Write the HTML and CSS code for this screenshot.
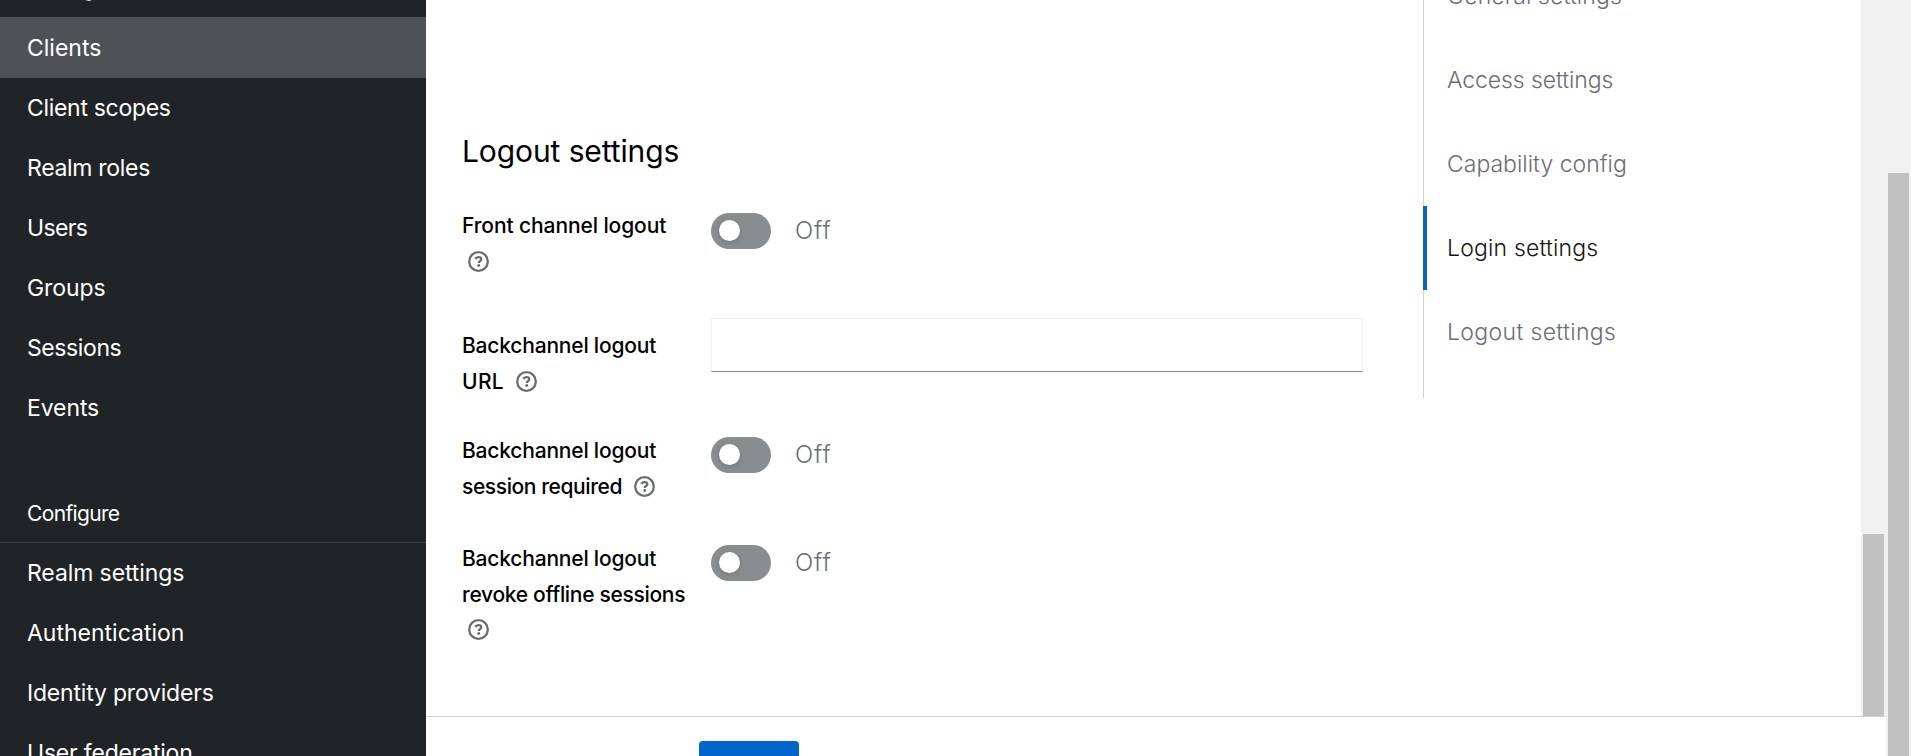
FILE: index.html
```html
<!DOCTYPE html>
<html lang="en">
<head>
<meta charset="utf-8">
<title>Client settings</title>
<link rel="stylesheet" href="styles.css">
</head>
<body>
<svg class="sprite" aria-hidden="true">
  <symbol id="help" viewBox="0 0 21 21">
    <circle cx="10.5" cy="10.5" r="9.3" fill="none" stroke="#6a6e73" stroke-width="2.3"/>
    <path d="M7.5 8.2C8 6.8 9.1 6.2 10.5 6.2C12.2 6.2 13.3 7 13.3 8.3C13.3 10.1 10.7 9.9 10.7 12" fill="none" stroke="#6a6e73" stroke-width="2.3"/>
    <circle cx="10.7" cy="14.5" r="1.45" fill="#6a6e73"/>
  </symbol>
</svg>
<div class="page">
  <nav class="sidebar">
    <h2 class="nav-title nav-title-first"><span>Manage</span></h2>
    <a class="nav-item current"><span>Clients</span></a>
    <a class="nav-item"><span class="tight-3">Client scopes</span></a>
    <a class="nav-item"><span class="tight-3">Realm roles</span></a>
    <a class="nav-item"><span class="tight-6">Users</span></a>
    <a class="nav-item"><span class="tight-1">Groups</span></a>
    <a class="nav-item"><span class="tight-4">Sessions</span></a>
    <a class="nav-item"><span class="tight-1">Events</span></a>
    <h2 class="nav-title"><span>Configure</span></h2>
    <a class="nav-item"><span class="tight-1">Realm settings</span></a>
    <a class="nav-item"><span>Authentication</span></a>
    <a class="nav-item"><span class="tight-2">Identity providers</span></a>
    <a class="nav-item"><span class="tight-2">User federation</span></a>
  </nav>
  <main class="main">
    <div class="scroll-area">
      <section class="form">
        <h1 class="heading">Logout settings</h1>
        <div class="row row-front">
          <div class="label"><span class="tight-1">Front channel logout</span><br><svg class="help"><use href="#help"/></svg></div>
          <div class="switch"><span class="track"><span class="knob"></span></span><span class="off">Off</span></div>
        </div>
        <div class="row row-url">
          <div class="label label-url"><span class="tight-2">Backchannel logout</span><br><span class="wide-4">URL</span> <svg class="help"><use href="#help"/></svg></div>
          <input class="input" type="text" aria-label="Backchannel logout URL">
        </div>
        <div class="row row-session">
          <div class="label label-low"><span class="tight-2">Backchannel logout</span><br><span class="tight-4">session required</span> <svg class="help"><use href="#help"/></svg></div>
          <div class="switch"><span class="track"><span class="knob"></span></span><span class="off">Off</span></div>
        </div>
        <div class="row">
          <div class="label label-low"><span class="tight-2">Backchannel logout</span><br><span class="tight-3">revoke offline sessions</span><br><svg class="help help-up"><use href="#help"/></svg></div>
          <div class="switch"><span class="track"><span class="knob"></span></span><span class="off">Off</span></div>
        </div>
      </section>
      <aside class="jump">
        <a class="jump-item"><span class="wide-1">General settings</span></a>
        <a class="jump-item"><span class="tight-1">Access settings</span></a>
        <a class="jump-item"><span>Capability config</span></a>
        <a class="jump-item active"><span class="wide-2">Login settings</span></a>
        <a class="jump-item"><span class="wide-4">Logout settings</span></a>
      </aside>
      <div class="bar bar-inner"><div class="thumb"></div></div>
    </div>
    <footer class="actions"><button class="save" aria-label="Save"></button></footer>
  </main>
  <div class="bar bar-outer"><div class="thumb"></div></div>
</div>
</body>
</html>
```
FILE: styles.css
```css
* { box-sizing: border-box; }
body {
  margin: 0;
  overflow: hidden;
  background: #fff;
  font-family: Inter, "Open Sans", sans-serif;
  color: #151515;
}
.sprite { display: none; }
.page { display: flex; width: 1911px; height: 756px; overflow: hidden; }

/* letter-spacing helpers */
.tight-1 { letter-spacing: -0.1px; }
.tight-2 { letter-spacing: -0.2px; }
.tight-3 { letter-spacing: -0.31px; }
.tight-4 { letter-spacing: -0.4px; }
.tight-6 { letter-spacing: -0.65px; }
.wide-1 { letter-spacing: 0.12px; }
.wide-2 { letter-spacing: 0.18px; }
.wide-4 { letter-spacing: 0.35px; }

.sidebar { flex: none; width: 426px; background: #212427; color: #fff; overflow: hidden; white-space: nowrap; }
.nav-title {
  display: flex;
  align-items: flex-end;
  height: 105px;
  margin: 0;
  padding: 0 27px 12px;
  border-bottom: 1px solid #3c3f42;
  font-size: 21px;
  line-height: 32px;
  font-weight: 400;
  letter-spacing: -0.65px;
}
.nav-title-first { margin-top: -87px; border-bottom-color: #4f5255; letter-spacing: 0; }
.nav-item { display: flex; align-items: center; height: 60px; padding: 0 27px; font-size: 23px; line-height: 36px; }
.current { background: #4f5255; }

.main { flex: none; display: flex; flex-direction: column; width: 1460px; }
.scroll-area { display: flex; height: 716px; overflow: hidden; }
.form { flex: none; width: 937px; margin-right: 60px; padding: 132px 0 0 36px; }
.heading { height: 40px; margin: 0 0 36px; font-size: 30px; line-height: 39px; font-weight: 400; color: #000; letter-spacing: -0.1px; }
.row { display: flex; align-items: flex-start; }
.row-front { height: 110px; }
.row-url { height: 114px; }
.row-session { height: 108px; }
.label { flex: none; width: 249px; font-size: 21px; line-height: 36px; font-weight: 500; color: #000; white-space: nowrap; }
.label-url { padding-top: 10px; }
.label-low { padding-top: 1px; }
.help { width: 21px; height: 21px; margin-left: 6px; vertical-align: -3px; }
.help-up { vertical-align: -2px; }
.switch { display: flex; align-items: center; height: 36px; margin-top: 5px; }
.track { width: 60px; height: 36px; padding: 7px 8px; border-radius: 18px; background: #8a8d90; }
.knob { display: block; width: 21px; height: 21px; border-radius: 50%; background: #fff; box-shadow: 0 1px 4px rgba(0, 0, 0, .2); }
.off { margin-left: 24px; font-size: 24px; line-height: 36px; font-weight: 300; color: #6a6e73; letter-spacing: 0.9px; }
.input { width: 652px; height: 54px; border: 1px solid #f0f0f0; border-bottom-color: #8a8d90; background: #fff; }

.jump { flex: none; width: 438px; height: 444px; margin-top: -46px; border-left: 1px solid #d2d2d2; }
.jump-item { display: flex; align-items: center; height: 84px; padding-left: 23px; font-size: 23px; font-weight: 300; color: #6a6e73; white-space: nowrap; }
.jump-item.active { margin-left: -1px; padding-left: 20px; border-left: 4px solid #0f62be; color: #151515; }

.bar { flex: none; width: 25px; background: #f0f0f0; }
.thumb { width: 21px; margin-left: 2px; background: #c1c1c1; }
.bar-inner { padding-top: 534px; }
.bar-inner .thumb { height: 182px; }
.bar-outer { padding-top: 173px; }
.bar-outer .thumb { height: 583px; }

.actions { height: 40px; padding: 24px 0 0 273px; border-top: 1px solid #d2d2d2; }
.save { display: block; width: 100px; height: 54px; border: 0; border-radius: 4px; background: #06c; }
```
